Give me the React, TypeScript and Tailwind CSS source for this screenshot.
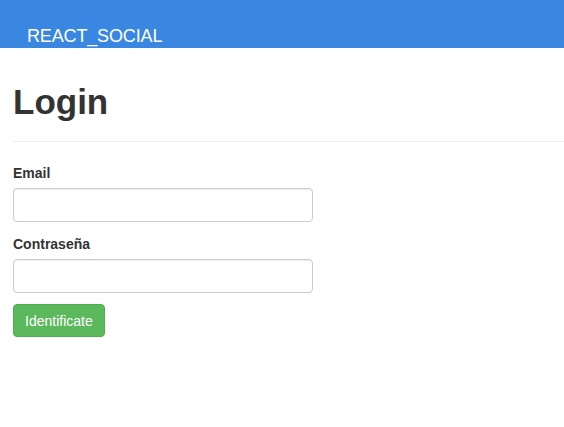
export default function App() {
  return (
    <div className="min-h-screen bg-white font-['Liberation_Sans',Arial,sans-serif] text-[14px] text-[#333]">
      <header className="h-12 overflow-hidden bg-[#3a87e2] pl-[27px] pt-[26px]">
        <span className="text-[18px] leading-[20px] tracking-[-0.15px] text-white">REACT_SOCIAL</span>
      </header>

      <main className="pl-[13px]">
        <div className="mt-[34px] border-b border-[#eee] pb-[19px]">
          <h1 className="text-[35px] font-bold leading-[40px]">Login</h1>
        </div>

        <form className="mt-[21px] w-[300px]" onSubmit={(e) => e.preventDefault()}>
          <div className="mb-[12px]">
            <label className="mb-[5px] block font-bold leading-[20px]">Email</label>
            <input
              type="email"
              className="block h-[34px] w-full rounded-[4px] border border-[#ccc] px-3 shadow-[inset_0_1px_1px_rgba(0,0,0,0.075)] outline-none"
            />
          </div>
          <div className="mb-[11px]">
            <label className="mb-[5px] block font-bold leading-[20px]">Contraseña</label>
            <input
              type="password"
              className="block h-[34px] w-full rounded-[4px] border border-[#ccc] px-3 shadow-[inset_0_1px_1px_rgba(0,0,0,0.075)] outline-none"
            />
          </div>
          <button
            type="submit"
            className="h-[33px] rounded-[4px] border border-[#4cae4c] bg-[#5cb85c] px-[11px] leading-[20px] text-white"
          >
            Identificate
          </button>
        </form>
      </main>
    </div>
  )
}
